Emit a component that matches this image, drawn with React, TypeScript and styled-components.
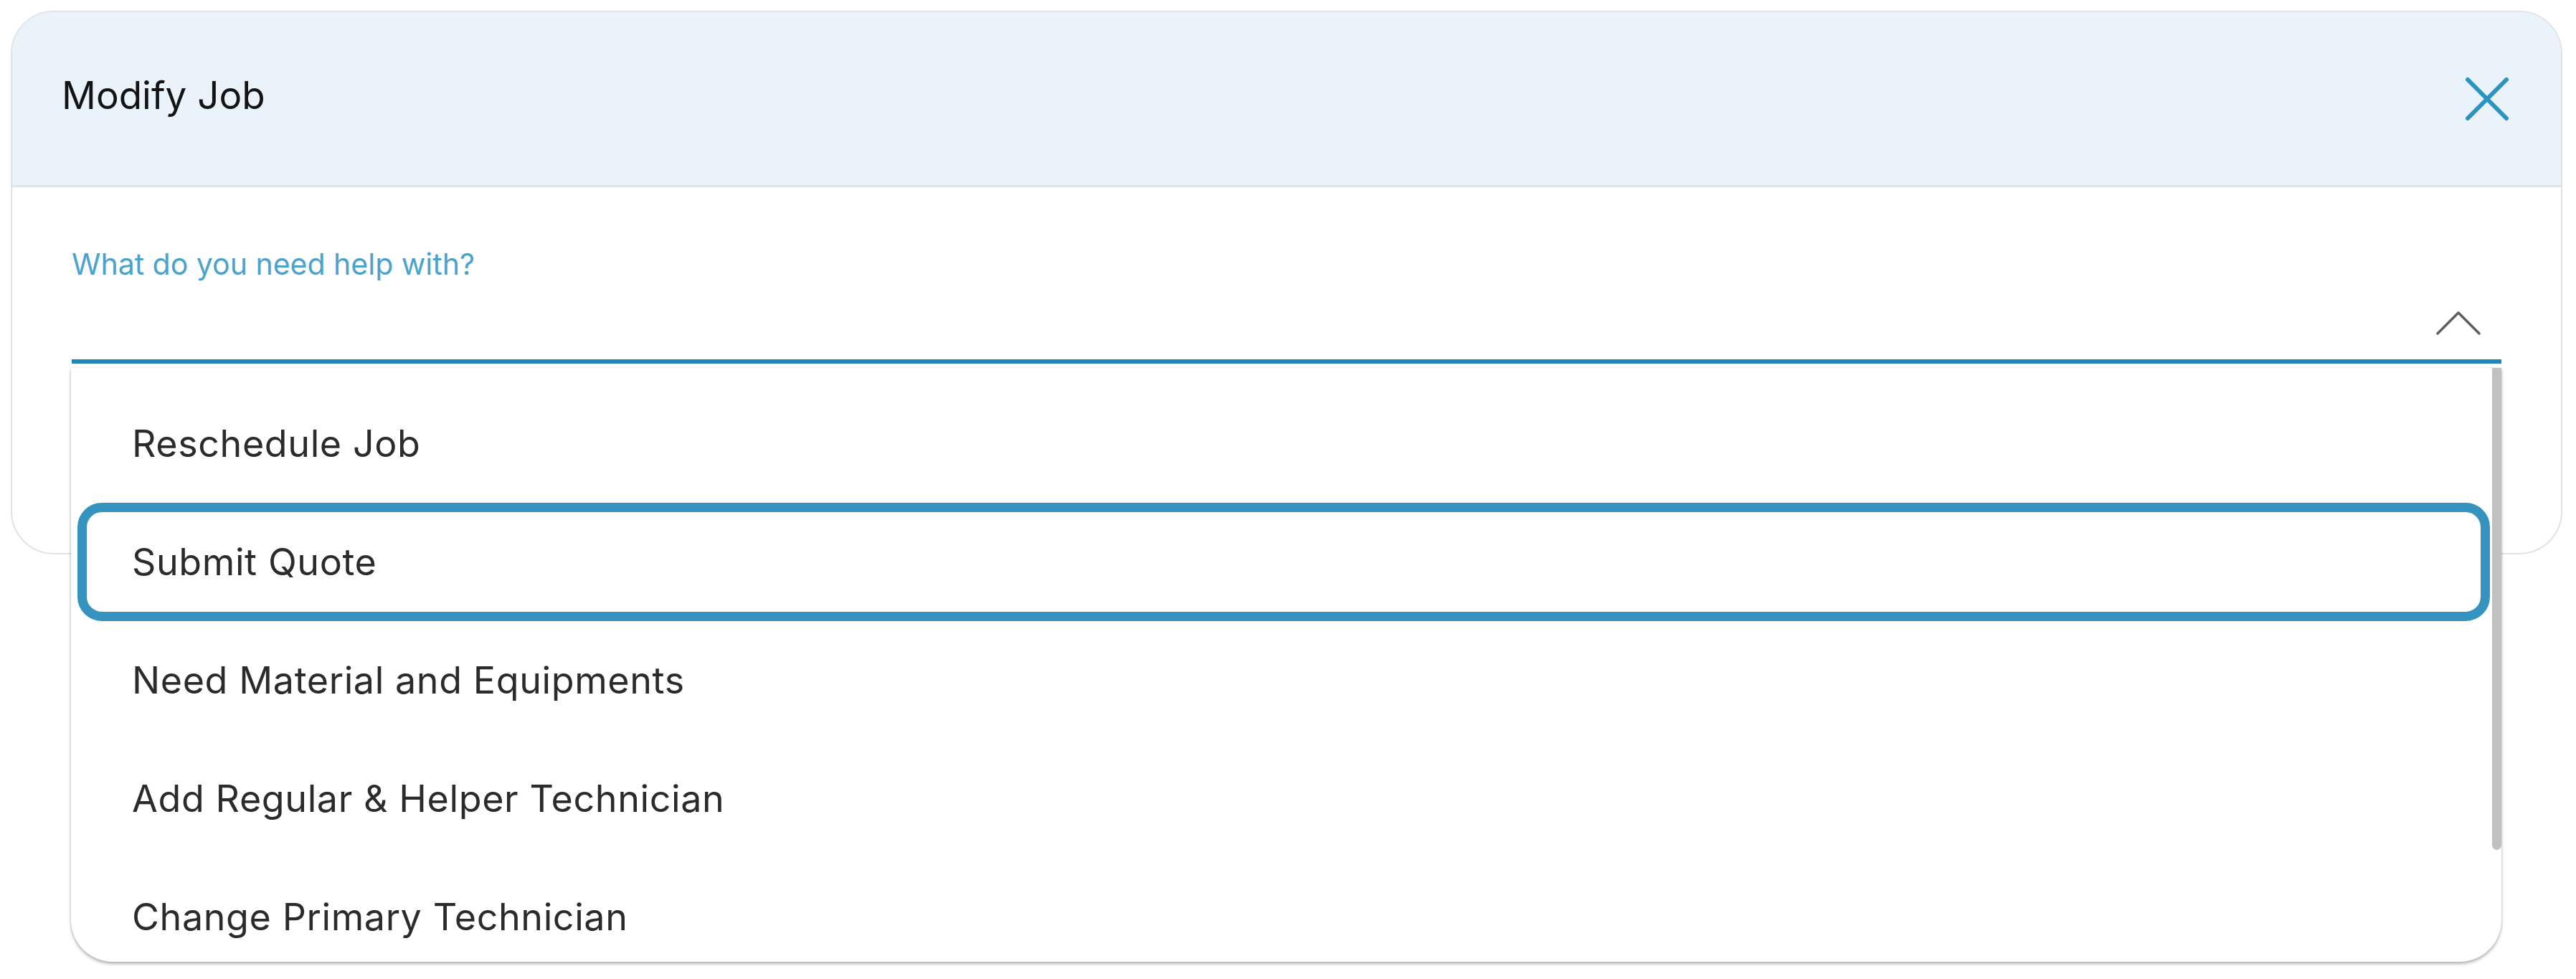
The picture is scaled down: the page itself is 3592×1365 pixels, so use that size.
import React from 'react';
import styled, { createGlobalStyle } from 'styled-components';

const GlobalStyle = createGlobalStyle`
  html, body {
    margin: 0;
    padding: 0;
    background: #ffffff;
  }
  body {
    font-family: 'Inter', 'Noto Sans', sans-serif;
  }
`;

const options = [
	'Reschedule Job',
	'Submit Quote',
	'Need Material and Equipments',
	'Add Regular & Helper Technician',
	'Change Primary Technician',
];

const CloseIcon: React.FC = () => (
	<svg width="60" height="60" viewBox="0 0 60 60" fill="none">
		<path d="M3 3 L57 57 M57 3 L3 57" stroke="#2a93c2" strokeWidth="6" strokeLinecap="round" />
	</svg>
);

const ChevronUp: React.FC = () => (
	<svg width="62" height="34" viewBox="0 0 62 34" fill="none">
		<path d="M2 31 L31 2 L60 31" stroke="#5f5f5f" strokeWidth="3.5" strokeLinecap="round" strokeLinejoin="round" />
	</svg>
);

const App: React.FC = () => {
	const selected = 1;
	return (
		<>
			<GlobalStyle />
			<Page>
				<Card>
					<Header>
						<Title>Modify Job</Title>
						<CloseButton aria-label="close">
							<CloseIcon />
						</CloseButton>
					</Header>
					<Body>
						<Label>What do you need help with?</Label>
						<Field>
							<ChevronUp />
						</Field>
						<Menu>
							<OptionList>
								{options.map((option, i) => (
									<Option key={option} $active={i === selected}>
										{option}
									</Option>
								))}
							</OptionList>
							<ScrollThumb />
						</Menu>
					</Body>
				</Card>
			</Page>
		</>
	);
};
export default App;

const Page = styled.div`
	padding: 15px 19px 0 15px;
	height: 1365px;
	box-sizing: border-box;
`;

const Card = styled.div`
	border: 2px solid #e0e3e5;
	border-radius: 60px;
	background: #ffffff;
	display: flex;
	flex-direction: column;
`;

const Header = styled.div`
	height: 241px;
	display: flex;
	align-items: center;
	justify-content: space-between;
	padding: 0 73px 0 69px;
	background: #eaf3f9;
	border-bottom: 3px solid #e1e3e5;
	border-radius: 58px 58px 0 0;
`;

const Title = styled.div`
	font-size: 53px;
	color: #141414;
	margin-top: -10px;
`;

const CloseButton = styled.button`
	border: none;
	background: transparent;
	padding: 0;
	display: flex;
	cursor: pointer;
`;

const Body = styled.div`
	position: relative;
	height: 510px;
	padding: 82px 83px 0 83px;
	box-sizing: border-box;
`;

const Label = styled.div`
	font-size: 41px;
	line-height: 50px;
	color: #4aa3cc;
`;

const Field = styled.div`
	height: 114px;
	display: flex;
	align-items: center;
	justify-content: flex-end;
	padding: 8px 29px 0 0;
	box-sizing: border-box;
	border-bottom: 6px solid #1f86b6;
`;

const Menu = styled.div`
	position: absolute;
	top: 252px;
	left: 82px;
	right: 83px;
	height: 828px;
	background: #ffffff;
	border-radius: 0 0 58px 58px;
	box-shadow: 0 3px 4px rgba(0, 0, 0, 0.28), 0 0 3px rgba(0, 0, 0, 0.12);
	overflow: hidden;
`;

const OptionList = styled.div`
	padding: 23px 16px 0 9px;
`;

const ScrollThumb = styled.div`
	position: absolute;
	top: 0;
	right: 0;
	width: 13px;
	height: 672px;
	background: #c1c1c1;
	border-radius: 0 0 7px 7px;
`;

const Option = styled.div<{ $active: boolean }>`
	height: 165px;
	box-sizing: border-box;
	padding-left: 63px;
	display: flex;
	align-items: center;
	border: 13px solid ${(props) => (props.$active ? '#3494bf' : 'transparent')};
	border-radius: 34px;
	font-size: 52px;
	letter-spacing: 0.6px;
	color: #2b2b2b;
	cursor: pointer;
`;
